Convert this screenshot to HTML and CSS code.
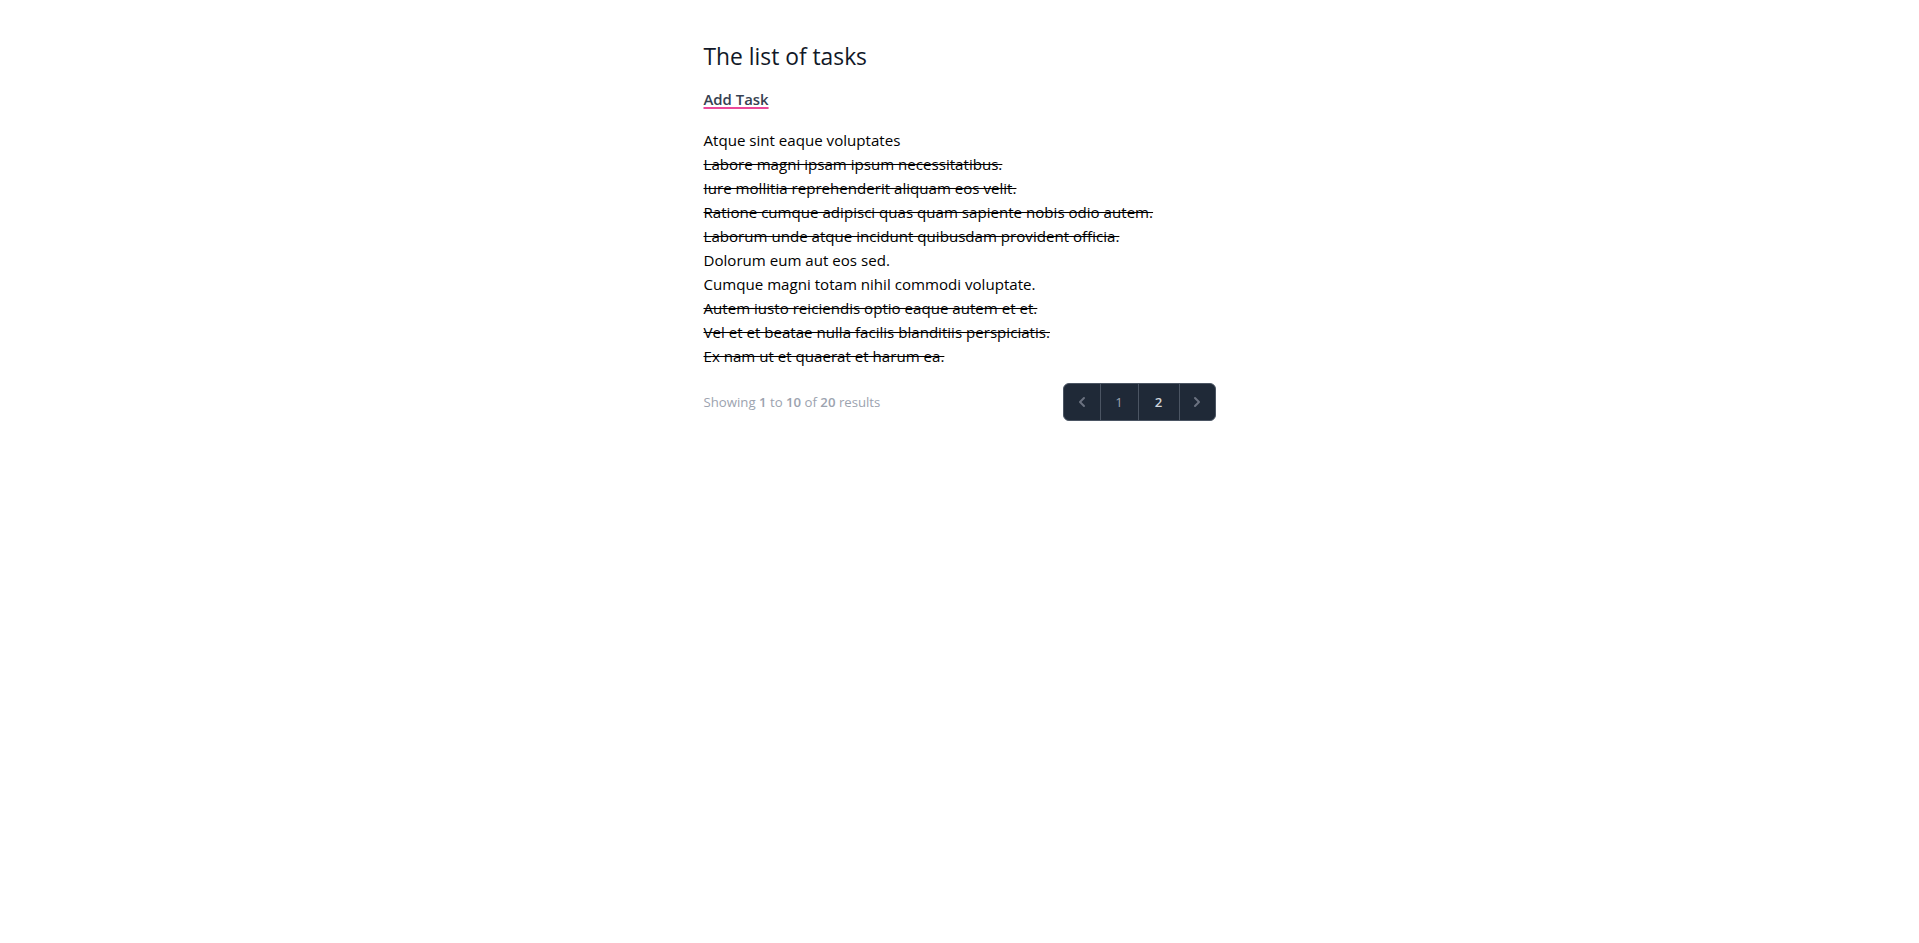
FILE: index.html
```html
<!DOCTYPE html>
<html lang="en">
<head>
<meta charset="utf-8">
<title>Tasks</title>
<link rel="stylesheet" href="styles.css">
</head>
<body>
<main class="page">
  <h1 class="title">The list of tasks</h1>
  <div class="actions"><a class="add-link" href="#">Add Task</a></div>
  <ul class="tasks">
    <li>Atque sint eaque voluptates</li>
    <li class="done">Labore magni ipsam ipsum necessitatibus.</li>
    <li class="done">Iure mollitia reprehenderit aliquam eos velit.</li>
    <li class="done">Ratione cumque adipisci quas quam sapiente nobis odio autem.</li>
    <li class="done">Laborum unde atque incidunt quibusdam provident officia.</li>
    <li>Dolorum eum aut eos sed.</li>
    <li>Cumque magni totam nihil commodi voluptate.</li>
    <li class="done">Autem iusto reiciendis optio eaque autem et et.</li>
    <li class="done">Vel et et beatae nulla facilis blanditiis perspiciatis.</li>
    <li class="done">Ex nam ut et quaerat et harum ea.</li>
  </ul>
  <nav class="pager">
    <p class="summary">Showing <b>1</b> to <b>10</b> of <b>20</b> results</p>
    <div class="pages">
      <span class="cell prev"><svg viewBox="0 0 20 20" width="20" height="20" fill="currentColor"><path fill-rule="evenodd" d="M12.707 5.293a1 1 0 010 1.414L9.414 10l3.293 3.293a1 1 0 01-1.414 1.414l-4-4a1 1 0 010-1.414l4-4a1 1 0 011.414 0z" clip-rule="evenodd"/></svg></span>
      <a class="cell num" href="#">1</a>
      <span class="cell num current">2</span>
      <a class="cell next" href="#"><svg viewBox="0 0 20 20" width="20" height="20" fill="currentColor"><path fill-rule="evenodd" d="M7.293 14.707a1 1 0 010-1.414L10.586 10 7.293 6.707a1 1 0 011.414-1.414l4 4a1 1 0 010 1.414l-4 4a1 1 0 01-1.414 0z" clip-rule="evenodd"/></svg></a>
    </div>
  </nav>
</main>
</body>
</html>
```
FILE: styles.css
```css
html, body {
  margin: 0;
  padding: 0;
  background: #ffffff;
}
body {
  font-family: "Open Sans", "Noto Sans", sans-serif;
  color: #000000;
}
.page {
  width: 512px;
  margin: 0 auto;
  padding: 41px 0 40px;
  box-sizing: border-box;
}
.title {
  margin: 0;
  font-size: 22.8px;
  line-height: 32px;
  font-weight: 400;
  color: #111827;
}
.actions {
  margin-top: 14px;
  font-size: 14.9px;
  line-height: 24px;
}
.add-link {
  color: #374151;
  font-weight: 600;
  text-decoration: underline;
  text-decoration-color: #ec4899;
  text-decoration-thickness: 2px;
  text-underline-offset: 2px;
}
.tasks {
  list-style: none;
  margin: 17px 0 0;
  padding: 0;
  font-size: 15.1px;
  line-height: 24px;
}
.tasks .done {
  text-decoration: line-through;
}
.pager {
  margin-top: 15px;
  display: flex;
  align-items: center;
  justify-content: space-between;
}
.summary {
  margin: 0;
  font-size: 13.2px;
  line-height: 20px;
  color: #9ca3af;
}
.summary b {
  font-weight: 600;
}
.pages {
  display: flex;
  height: 38px;
  box-sizing: border-box;
  border: 1px solid #4b5563;
  border-radius: 6px;
  background: #1f2937;
  overflow: hidden;
}
.cell {
  display: flex;
  align-items: center;
  justify-content: center;
  box-sizing: border-box;
  font-size: 13.2px;
  line-height: 20px;
  color: #9ca3af;
  text-decoration: none;
}
.cell + .cell {
  border-left: 1px solid #4b5563;
}
.prev { width: 36px; color: #6b7280; }
.num { width: 38px; }
.current { width: 41px; color: #d1d5db; font-weight: 600; }
.next { width: 36px; color: #6b7280; }
```
